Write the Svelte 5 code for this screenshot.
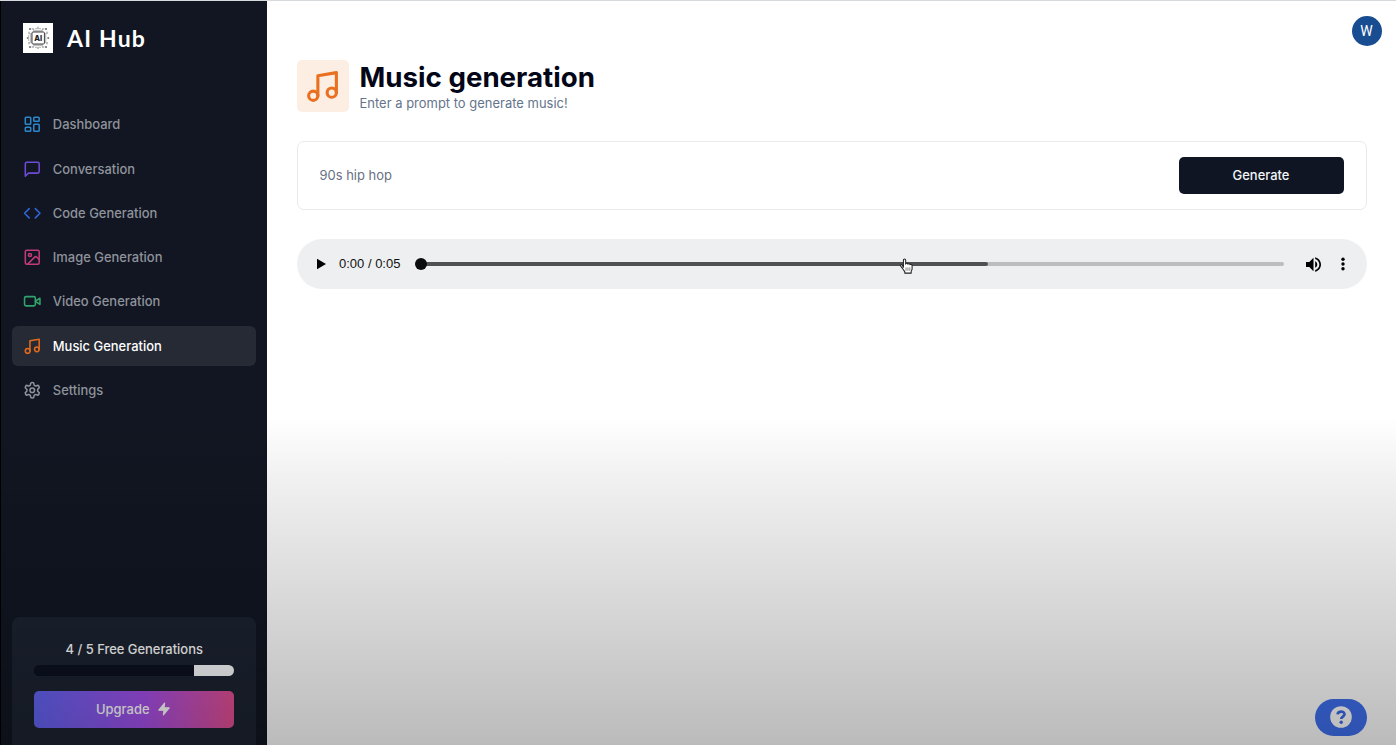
<script>
  const items = [
    { label: 'Dashboard', color: '#2b87c9', icon: 'dashboard' },
    { label: 'Conversation', color: '#6d4bd6', icon: 'message' },
    { label: 'Code Generation', color: '#2f68dc', icon: 'code' },
    { label: 'Image Generation', color: '#c23a7c', icon: 'image' },
    { label: 'Video Generation', color: '#2fa56d', icon: 'video' },
    { label: 'Music Generation', color: '#e2691b', icon: 'music', active: true },
    { label: 'Settings', color: '#8d929b', icon: 'settings' }
  ];
  const used = 4;
  const limit = 5;
</script>

{#snippet icon(name)}
  <svg class="icon" viewBox="0 0 24 24" fill="none" stroke="currentColor" stroke-width="2" stroke-linecap="round" stroke-linejoin="round">
    {#if name === 'dashboard'}
      <rect x="3" y="3" width="7" height="9" rx="1" /><rect x="14" y="3" width="7" height="5" rx="1" />
      <rect x="14" y="12" width="7" height="9" rx="1" /><rect x="3" y="16" width="7" height="5" rx="1" />
    {:else if name === 'message'}
      <path d="M21 15a2 2 0 0 1-2 2H7l-4 4V5a2 2 0 0 1 2-2h14a2 2 0 0 1 2 2z" />
    {:else if name === 'code'}
      <path d="m16 18 6-6-6-6M8 6l-6 6 6 6" />
    {:else if name === 'image'}
      <rect x="3" y="3" width="18" height="18" rx="2" /><circle cx="9" cy="9" r="2" />
      <path d="m21 15-3.1-3.1a2 2 0 0 0-2.8 0L6 21" />
    {:else if name === 'video'}
      <path d="m22 8-6 4 6 4V8Z" /><rect x="2" y="6" width="14" height="12" rx="2" />
    {:else if name === 'music'}
      <circle cx="6" cy="18" r="3" /><path d="M9 18V5l12-2v13" /><circle cx="18" cy="16" r="3" />
    {:else if name === 'settings'}
      <path d="M12.22 2h-.44a2 2 0 0 0-2 2v.18a2 2 0 0 1-1 1.73l-.43.25a2 2 0 0 1-2 0l-.15-.08a2 2 0 0 0-2.73.73l-.22.38a2 2 0 0 0 .73 2.73l.15.1a2 2 0 0 1 1 1.72v.51a2 2 0 0 1-1 1.74l-.15.09a2 2 0 0 0-.73 2.73l.22.38a2 2 0 0 0 2.73.73l.15-.08a2 2 0 0 1 2 0l.43.25a2 2 0 0 1 1 1.73V20a2 2 0 0 0 2 2h.44a2 2 0 0 0 2-2v-.18a2 2 0 0 1 1-1.73l.43-.25a2 2 0 0 1 2 0l.15.08a2 2 0 0 0 2.73-.73l.22-.39a2 2 0 0 0-.73-2.73l-.15-.08a2 2 0 0 1-1-1.74v-.5a2 2 0 0 1 1-1.74l.15-.09a2 2 0 0 0 .73-2.73l-.22-.38a2 2 0 0 0-2.73-.73l-.15.08a2 2 0 0 1-2 0l-.43-.25a2 2 0 0 1-1-1.73V4a2 2 0 0 0-2-2z" />
      <circle cx="12" cy="12" r="3" />
    {/if}
  </svg>
{/snippet}

<div class="app">
  <aside>
    <div class="brand">
      <svg class="logo" viewBox="0 0 30 30">
        <rect width="30" height="30" fill="#fff" />
        <g fill="none" stroke="#666" stroke-width=".8" stroke-dasharray="2.2 .7">
          <path d="M11 9V6H8M13 9V5M15 9V3M17 9V5M19 9V6h3M11 21v3H8M13 21v4M15 21v5M17 21v4M19 21v3h3" />
          <path d="M9 11H6V8M9 13H5M9 15H4M9 17H5M9 19H6v3M21 11h3V8M21 13h3M21 15h5M21 17h3M21 19h3v3" />
        </g>
        <g fill="#666"><circle cx="7" cy="6" r="1" /><circle cx="23" cy="6" r="1" /><circle cx="7" cy="24" r="1" /><circle cx="23" cy="24" r="1" /><circle cx="4.5" cy="15" r=".8" /><circle cx="25.5" cy="15" r=".8" /></g>
        <rect x="9" y="9" width="12.4" height="12" rx="1" fill="#fff" stroke="#444" stroke-width="1" />
        <text x="15.2" y="17.7" text-anchor="middle">AI</text>
      </svg>
      <h1>AI Hub</h1>
    </div>
    <nav>
      {#each items as item}
        <a class:active={item.active} style:--tint={item.color}>
          {@render icon(item.icon)}<span>{item.label}</span>
        </a>
      {/each}
    </nav>
    <section class="quota">
      <p>{used} / {limit} Free Generations</p>
      <div class="meter"><div style:width="{(used / limit) * 100}%"></div></div>
      <button class="upgrade">Upgrade
        <svg viewBox="0 0 24 24" fill="currentColor" stroke="currentColor" stroke-width="2" stroke-linejoin="round"><path d="M13 2 3 14h9l-1 8 10-12h-9l1-8z" /></svg>
      </button>
    </section>
  </aside>

  <main>
    <div class="topbar"><div class="avatar">W</div></div>
    <header>
      <div class="badge">{@render icon('music')}</div>
      <div class="titles">
        <h2>Music generation</h2>
        <p>Enter a prompt to generate music!</p>
      </div>
    </header>
    <div class="prompt">
      <span>90s hip hop</span>
      <button>Generate</button>
    </div>
    <div class="player">
      <svg class="play" viewBox="0 0 9 12"><path d="M0 .7v10.6L9 6z" /></svg>
      <span class="time">0:00 / 0:05</span>
      <div class="track">
        <div class="buffer"></div>
        <div class="thumb"></div>
        <svg class="cursor" viewBox="0 0 16 18"><path d="M4.2 10.2V2.5c0-1.8 2.4-1.8 2.4 0v3.6c.7-.9 2.1-.7 2.4.3.8-.7 2-.4 2.2.5 1-.4 2.2.1 2.2 1.3v3.1c0 1.4-.8 2.2-1 3.2V16H5.7v-1.5c-.6-1.1-2-2.4-2.8-3.8L1.1 8.3c-.5-1.2 1-1.8 1.8-.8z" fill="#fff" stroke="#222" stroke-width="1.1" /><path d="M7 10v3.5M9 10v3.5M11 10v3.5" stroke="#444" stroke-width=".7" /></svg>
      </div>
      <svg class="volume" viewBox="3 3 18 18"><path d="M3 9v6h4l5 5V4L7 9H3zm13.5 3c0-1.77-1.02-3.29-2.5-4.03v8.05c1.48-.73 2.5-2.25 2.5-4.02zM14 3.23v2.06c2.89.86 5 3.54 5 6.71s-2.11 5.85-5 6.71v2.06c4.01-.91 7-4.49 7-8.77s-2.99-7.86-7-8.77z" /></svg>
      <svg class="more" viewBox="0 0 4 14"><circle cx="2" cy="2.2" r="1.7" /><circle cx="2" cy="7" r="1.7" /><circle cx="2" cy="11.8" r="1.7" /></svg>
    </div>
  </main>

  <div class="help">
    <svg viewBox="0 0 22 22"><circle cx="11" cy="11" r="10.8" fill="#fff" /><path d="M7.6 8.4C8 4.6 14.6 4.7 14.5 8.3c0 2.3-3.3 2.4-3.3 4.8" fill="none" stroke="#3b6bea" stroke-width="2.7" /><circle cx="11.2" cy="16.2" r="1.7" fill="#3b6bea" /></svg>
  </div>
  <div class="shade"></div>
</div>

<style>
  :global(body) { margin: 0; }
  * { box-sizing: border-box; }
  h1, h2, p { margin: 0; }
  button { border: 0; padding: 0; font: inherit; color: inherit; }
  svg { display: block; flex: none; }
  .app {
    position: relative; display: flex; width: 1396px; height: 745px; overflow: hidden;
    border-top: 1px solid #d7dadc; background: #fff;
    font: 500 12.94px/18.5px Inter, sans-serif;
  }
  aside {
    width: 267px; flex: none; display: flex; flex-direction: column;
    padding: 22px 11.5px 0 11px; border-left: 1px solid #000; background: #111622; color: #fff;
  }
  .brand { display: flex; align-items: center; gap: 14px; height: 30px; padding-left: 11px; }
  .logo { width: 30px; height: 30px; }
  .logo text { font: 800 7.5px Inter, sans-serif; fill: #222; }
  h1 { font: 700 23px/30px Lato, sans-serif; letter-spacing: 1.2px; }
  nav { display: flex; flex-direction: column; gap: 3.7px; margin-top: 51.2px; }
  nav a {
    display: flex; align-items: center; gap: 11.3px; height: 40.6px; padding: 0 11px;
    border-radius: 6px; color: #8f939b;
  }
  nav a.active { background: #262a34; color: #fff; }
  .icon { width: 18.5px; height: 18.5px; }
  nav .icon { color: var(--tint); }
  .quota {
    margin-top: auto; height: 128px; padding: 22.5px 22px 0; border-radius: 8px 8px 0 0;
    background: #1c2331; text-align: center;
  }
  .quota p { letter-spacing: -.01px; padding-left: 1px; }
  .meter {
    height: 11px; margin: 7.3px 0 14.7px; border-radius: 6px; overflow: hidden;
    background: linear-gradient(90deg, #0c1120 50%, #fbfdff 50%);
  }
  .meter div { height: 100%; background: #0c1120; }
  .upgrade {
    display: flex; align-items: center; justify-content: center; gap: 8px; width: 100%; height: 37px;
    border-radius: 5px; background: linear-gradient(90deg, #6064f2, #a44fea 55%, #e44f92);
  }
  .upgrade svg { width: 14px; height: 14px; }
  main { flex: 1; min-width: 0; padding: 15px 29.5px 0 29.5px; }
  .topbar { display: flex; justify-content: flex-end; margin-right: -15px; }
  .avatar {
    width: 30px; height: 30px; border-radius: 50%; background: #194d92; color: #fff;
    font: 400 14px/30px Roboto, sans-serif; text-align: center;
  }
  header { display: flex; align-items: center; gap: 11px; margin-top: 14px; height: 52px; }
  .badge { display: grid; place-items: center; width: 52px; height: 52px; border-radius: 5px; background: #fdeee3; color: #e9701f; }
  .badge .icon { width: 37px; height: 37px; }
  .titles { padding-top: 1.6px; }
  h2 { font-size: 27.7px; line-height: 33px; font-weight: 700; color: #020617; }
  header p { color: #64748b; font-weight: 400; letter-spacing: .02px; }
  .prompt {
    display: flex; align-items: center; justify-content: space-between; height: 69px;
    margin-top: 29px; padding: 0 22px; border: 1px solid #e8eaed; border-radius: 7px;
    color: #687083; font-weight: 400;
  }
  .prompt button { width: 165px; height: 37px; border-radius: 5px; background: #101523; color: #f4f6fa; font-weight: 500; }
  .player {
    display: flex; align-items: center; height: 50px; margin-top: 29px; padding: 0 22px 0 20.5px;
    border-radius: 25px; background: #eeeff0; color: #111;
  }
  .play { width: 9px; height: 12px; }
  .time { margin-left: 13px; width: 62px; font: 400 13px/18px "Liberation Sans", sans-serif; white-space: nowrap; }
  .track { position: relative; flex: 1; height: 4px; margin: 0 22px 0 20px; border-radius: 2px; background: #bcbdbe; }
  .buffer { width: 65.7%; height: 100%; border-radius: 2px; background: #505152; }
  .thumb { position: absolute; left: -6px; top: -4px; width: 12px; height: 12px; border-radius: 50%; background: #0c0c0d; }
  .cursor { position: absolute; left: 478px; top: -4px; width: 16px; height: 17px; }
  .volume { width: 15px; height: 15px; }
  .more { width: 4px; height: 14px; margin-left: 20px; }
  .help {
    position: absolute; right: 29.5px; bottom: 9.5px; display: grid; place-items: center;
    width: 52px; height: 37px; border-radius: 19px; background: #3e6fee;
  }
  .help svg { width: 22px; height: 22px; }
  .shade {
    position: absolute; inset: 416px 0 0; pointer-events: none;
    background: linear-gradient(rgba(0, 0, 0, 0), rgba(0, 0, 0, .055) 18%, rgba(0, 0, 0, .1) 36%, rgba(0, 0, 0, .18) 67%, rgba(0, 0, 0, .265));
  }
</style>
